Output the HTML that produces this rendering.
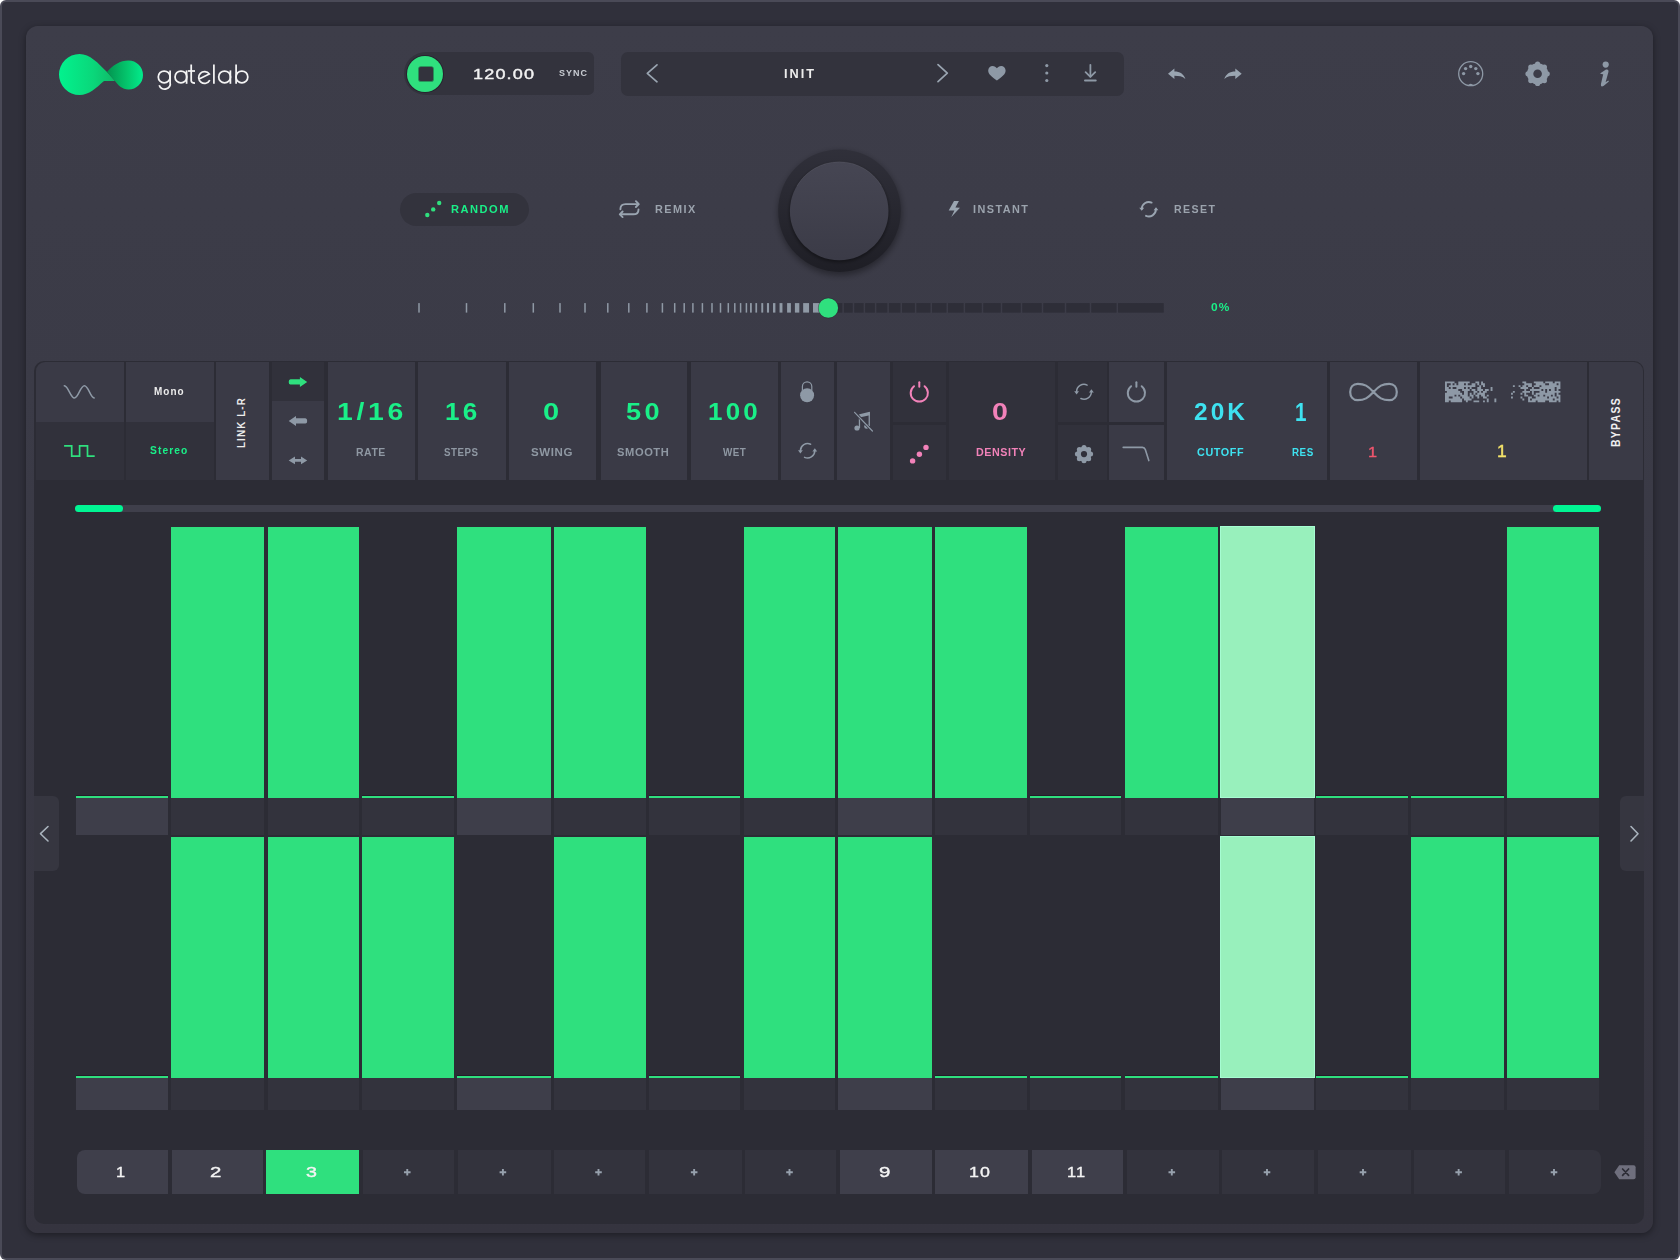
<!DOCTYPE html><html><head><meta charset="utf-8"><style>
html,body{margin:0;padding:0;}
body{width:1680px;height:1260px;overflow:hidden;background:#fff;position:relative;font-family:"Liberation Sans",sans-serif;}
body div, body svg{position:absolute;box-sizing:border-box;}
.t{white-space:nowrap;line-height:1;font-weight:bold;}
</style></head><body>

<div style="left:0px;top:0px;width:1680px;height:1260px;background:#4a4a57;border-radius:6px;"></div>
<div style="left:2px;top:2px;width:1676px;height:1256px;background:#30303b;border-radius:4px;"></div>
<div style="left:26px;top:26px;width:1627px;height:1207px;background:linear-gradient(#3d3d49,#3b3b47 30%,#35343f);border-radius:12px;box-shadow:0 2px 7px rgba(0,0,0,.4);"></div>
<div style="left:34px;top:361px;width:1610px;height:863px;background:#2c2c35;border-radius:10px;"></div>
<div style="left:76px;top:795px;width:92px;height:1px;background:#231d29;"></div>
<div style="left:76px;top:796px;width:92px;height:2px;background:#2fe07e;"></div>
<div style="left:76px;top:798px;width:92px;height:37px;background:#3e3e4a;"></div>
<div style="left:76px;top:1075px;width:92px;height:1px;background:#231d29;"></div>
<div style="left:76px;top:1076px;width:92px;height:2px;background:#2fe07e;"></div>
<div style="left:76px;top:1078px;width:92px;height:32px;background:#3e3e4a;"></div>
<div style="left:170.9px;top:527px;width:93.5px;height:271px;background:#2fe07e;"></div>
<div style="left:170.9px;top:798px;width:93.5px;height:37px;background:#33333d;"></div>
<div style="left:170.9px;top:837px;width:93.5px;height:241px;background:#2fe07e;"></div>
<div style="left:170.9px;top:1078px;width:93.5px;height:32px;background:#33333d;"></div>
<div style="left:267.6px;top:527px;width:91.8px;height:271px;background:#2fe07e;"></div>
<div style="left:267.6px;top:798px;width:91.8px;height:37px;background:#33333d;"></div>
<div style="left:267.6px;top:837px;width:91.8px;height:241px;background:#2fe07e;"></div>
<div style="left:267.6px;top:1078px;width:91.8px;height:32px;background:#33333d;"></div>
<div style="left:362.3px;top:795px;width:92.0px;height:1px;background:#231d29;"></div>
<div style="left:362.3px;top:796px;width:92.0px;height:2px;background:#2fe07e;"></div>
<div style="left:362.3px;top:798px;width:92.0px;height:37px;background:#33333d;"></div>
<div style="left:362.3px;top:837px;width:92.0px;height:241px;background:#2fe07e;"></div>
<div style="left:362.3px;top:1078px;width:92.0px;height:32px;background:#33333d;"></div>
<div style="left:457.1px;top:527px;width:93.8px;height:271px;background:#2fe07e;"></div>
<div style="left:457.1px;top:798px;width:93.8px;height:37px;background:#3e3e4a;"></div>
<div style="left:457.1px;top:1075px;width:93.8px;height:1px;background:#231d29;"></div>
<div style="left:457.1px;top:1076px;width:93.8px;height:2px;background:#2fe07e;"></div>
<div style="left:457.1px;top:1078px;width:93.8px;height:32px;background:#3e3e4a;"></div>
<div style="left:553.9px;top:527px;width:91.8px;height:271px;background:#2fe07e;"></div>
<div style="left:553.9px;top:798px;width:91.8px;height:37px;background:#33333d;"></div>
<div style="left:553.9px;top:837px;width:91.8px;height:241px;background:#2fe07e;"></div>
<div style="left:553.9px;top:1078px;width:91.8px;height:32px;background:#33333d;"></div>
<div style="left:648.6px;top:795px;width:91.9px;height:1px;background:#231d29;"></div>
<div style="left:648.6px;top:796px;width:91.9px;height:2px;background:#2fe07e;"></div>
<div style="left:648.6px;top:798px;width:91.9px;height:37px;background:#33333d;"></div>
<div style="left:648.6px;top:1075px;width:91.9px;height:1px;background:#231d29;"></div>
<div style="left:648.6px;top:1076px;width:91.9px;height:2px;background:#2fe07e;"></div>
<div style="left:648.6px;top:1078px;width:91.9px;height:32px;background:#33333d;"></div>
<div style="left:743.7px;top:527px;width:91.4px;height:271px;background:#2fe07e;"></div>
<div style="left:743.7px;top:798px;width:91.4px;height:37px;background:#33333d;"></div>
<div style="left:743.7px;top:837px;width:91.4px;height:241px;background:#2fe07e;"></div>
<div style="left:743.7px;top:1078px;width:91.4px;height:32px;background:#33333d;"></div>
<div style="left:838.2px;top:527px;width:93.7px;height:271px;background:#2fe07e;"></div>
<div style="left:838.2px;top:798px;width:93.7px;height:37px;background:#3e3e4a;"></div>
<div style="left:838.2px;top:837px;width:93.7px;height:241px;background:#2fe07e;"></div>
<div style="left:838.2px;top:1078px;width:93.7px;height:32px;background:#3e3e4a;"></div>
<div style="left:934.8px;top:527px;width:92.0px;height:271px;background:#2fe07e;"></div>
<div style="left:934.8px;top:798px;width:92.0px;height:37px;background:#33333d;"></div>
<div style="left:934.8px;top:1075px;width:92.0px;height:1px;background:#231d29;"></div>
<div style="left:934.8px;top:1076px;width:92.0px;height:2px;background:#2fe07e;"></div>
<div style="left:934.8px;top:1078px;width:92.0px;height:32px;background:#33333d;"></div>
<div style="left:1029.9px;top:795px;width:91.6px;height:1px;background:#231d29;"></div>
<div style="left:1029.9px;top:796px;width:91.6px;height:2px;background:#2fe07e;"></div>
<div style="left:1029.9px;top:798px;width:91.6px;height:37px;background:#33333d;"></div>
<div style="left:1029.9px;top:1075px;width:91.6px;height:1px;background:#231d29;"></div>
<div style="left:1029.9px;top:1076px;width:91.6px;height:2px;background:#2fe07e;"></div>
<div style="left:1029.9px;top:1078px;width:91.6px;height:32px;background:#33333d;"></div>
<div style="left:1124.8px;top:527px;width:93.3px;height:271px;background:#2fe07e;"></div>
<div style="left:1124.8px;top:798px;width:93.3px;height:37px;background:#33333d;"></div>
<div style="left:1124.8px;top:1075px;width:93.3px;height:1px;background:#231d29;"></div>
<div style="left:1124.8px;top:1076px;width:93.3px;height:2px;background:#2fe07e;"></div>
<div style="left:1124.8px;top:1078px;width:93.3px;height:32px;background:#33333d;"></div>
<div style="left:1219.5px;top:525.5px;width:95.0px;height:272.5px;background:#98f0bc;border:1px solid #a6fdd2;"></div>
<div style="left:1220.5px;top:798px;width:93.0px;height:37px;background:#3e3e4a;"></div>
<div style="left:1219.5px;top:835.5px;width:95.0px;height:242.5px;background:#98f0bc;border:1px solid #a6fdd2;"></div>
<div style="left:1220.5px;top:1078px;width:93.0px;height:32px;background:#3e3e4a;"></div>
<div style="left:1316.2px;top:795px;width:91.8px;height:1px;background:#231d29;"></div>
<div style="left:1316.2px;top:796px;width:91.8px;height:2px;background:#2fe07e;"></div>
<div style="left:1316.2px;top:798px;width:91.8px;height:37px;background:#33333d;"></div>
<div style="left:1316.2px;top:1075px;width:91.8px;height:1px;background:#231d29;"></div>
<div style="left:1316.2px;top:1076px;width:91.8px;height:2px;background:#2fe07e;"></div>
<div style="left:1316.2px;top:1078px;width:91.8px;height:32px;background:#33333d;"></div>
<div style="left:1410.9px;top:795px;width:93.3px;height:1px;background:#231d29;"></div>
<div style="left:1410.9px;top:796px;width:93.3px;height:2px;background:#2fe07e;"></div>
<div style="left:1410.9px;top:798px;width:93.3px;height:37px;background:#33333d;"></div>
<div style="left:1410.9px;top:837px;width:93.3px;height:241px;background:#2fe07e;"></div>
<div style="left:1410.9px;top:1078px;width:93.3px;height:32px;background:#33333d;"></div>
<div style="left:1507.2px;top:527px;width:91.8px;height:271px;background:#2fe07e;"></div>
<div style="left:1507.2px;top:798px;width:91.8px;height:37px;background:#33333d;"></div>
<div style="left:1507.2px;top:837px;width:91.8px;height:241px;background:#2fe07e;"></div>
<div style="left:1507.2px;top:1078px;width:91.8px;height:32px;background:#33333d;"></div>
<div style="left:74.5px;top:505px;width:1526px;height:7px;background:#3f3f4b;border-radius:4px;"></div>
<div style="left:74.5px;top:505px;width:48px;height:7px;background:#00f593;border-radius:4px;"></div>
<div style="left:1553px;top:505px;width:48px;height:7px;background:#00f593;border-radius:4px;"></div>
<div style="left:34px;top:796px;width:25px;height:75px;background:#363640;border-radius:0 6px 6px 0;"></div>
<div style="left:1619.5px;top:796px;width:24.5px;height:75px;background:#363640;border-radius:6px 0 0 6px;"></div>
<svg style="left:0;top:0" width="1680" height="1260" viewBox="0 0 1680 1260"><g fill="none" stroke="#a9b3bd" stroke-width="1.6" stroke-linecap="round" stroke-linejoin="round"><path d="M48 826.5 L40.5 833.7 L48 841"/><path d="M1631 826.5 L1638 833.7 L1631 841"/></g></svg>
<div style="left:77px;top:1150px;width:90.5px;height:44px;background:#3f3f4b;border-radius:8px 0 0 8px;"></div>
<div class="t" style="left:116.28px;top:1165.25px;font-size:14.49px;letter-spacing:0px;color:#f4f4f4;transform:scaleX(1.1233);transform-origin:0 0;font-weight:normal;-webkit-text-stroke:0.4px #f4f4f4;">1</div>
<div style="left:171.75px;top:1150px;width:90.75px;height:44px;background:#3f3f4b;"></div>
<div class="t" style="left:210.24px;top:1165.43px;font-size:14.29px;letter-spacing:0px;color:#f4f4f4;transform:scaleX(1.4231);transform-origin:0 0;font-weight:normal;-webkit-text-stroke:0.4px #f4f4f4;">2</div>
<div style="left:266.25px;top:1150px;width:92.5px;height:44px;background:#2fe07e;"></div>
<div class="t" style="left:306.22px;top:1165.46px;font-size:14.08px;letter-spacing:0px;color:#f4f4f4;transform:scaleX(1.3973);transform-origin:0 0;font-weight:normal;-webkit-text-stroke:0.4px #f4f4f4;">3</div>
<div style="left:363px;top:1150px;width:90.75px;height:44px;background:#33333d;"></div>
<div style="left:457.5px;top:1150px;width:93.0px;height:44px;background:#33333d;"></div>
<div style="left:553.9px;top:1150px;width:91.4px;height:44px;background:#33333d;"></div>
<div style="left:648.6px;top:1150px;width:93.3px;height:44px;background:#33333d;"></div>
<div style="left:744.8px;top:1150px;width:91.6px;height:44px;background:#33333d;"></div>
<div style="left:840px;top:1150px;width:91.7px;height:44px;background:#3f3f4b;"></div>
<div class="t" style="left:879.08px;top:1164.31px;font-size:15.07px;letter-spacing:0px;color:#f4f4f4;transform:scaleX(1.3556);transform-origin:0 0;font-weight:normal;-webkit-text-stroke:0.4px #f4f4f4;">9</div>
<div style="left:935.2px;top:1150px;width:92.8px;height:44px;background:#3f3f4b;"></div>
<div class="t" style="left:969.16px;top:1164.31px;font-size:15.07px;letter-spacing:1.0px;color:#f4f4f4;transform:scaleX(1.1838);transform-origin:0 0;font-weight:normal;-webkit-text-stroke:0.4px #f4f4f4;">10</div>
<div style="left:1031.7px;top:1150px;width:91.3px;height:44px;background:#3f3f4b;"></div>
<div class="t" style="left:1066.78px;top:1164.40px;font-size:15.51px;letter-spacing:1.0px;color:#f4f4f4;transform:scaleX(1.0528);transform-origin:0 0;font-weight:normal;-webkit-text-stroke:0.4px #f4f4f4;">11</div>
<div style="left:1126.8px;top:1150px;width:92.2px;height:44px;background:#33333d;"></div>
<div style="left:1222.4px;top:1150px;width:91.4px;height:44px;background:#33333d;"></div>
<div style="left:1317.6px;top:1150px;width:93.0px;height:44px;background:#33333d;"></div>
<div style="left:1414.2px;top:1150px;width:91.1px;height:44px;background:#33333d;"></div>
<div style="left:1509px;top:1150px;width:92.2px;height:44px;background:#33333d;border-radius:0 8px 8px 0;"></div>
<svg style="left:0;top:1140px" width="1680" height="60" viewBox="0 1140 1680 60"><path d="M403.97 1172.20H410.57M407.27 1168.90V1175.50M499.60 1172.20H506.20M502.90 1168.90V1175.50M595.20 1172.20H601.80M598.50 1168.90V1175.50M690.85 1172.20H697.45M694.15 1168.90V1175.50M786.20 1172.20H792.80M789.50 1168.90V1175.50M1168.50 1172.20H1175.10M1171.80 1168.90V1175.50M1263.70 1172.20H1270.30M1267.00 1168.90V1175.50M1359.70 1172.20H1366.30M1363.00 1168.90V1175.50M1455.35 1172.20H1461.95M1458.65 1168.90V1175.50M1550.70 1172.20H1557.30M1554.00 1168.90V1175.50" stroke="#97a1ad" stroke-width="1.9" fill="none"/></svg>
<div style="left:403.5px;top:51.7px;width:190.5px;height:43.7px;background:#33333d;border-radius:22px 6px 6px 22px;"></div>
<div style="left:407.3px;top:55.7px;width:36.2px;height:36.2px;background:#2fe07e;border-radius:50%;box-shadow:0 0 0 1px rgba(30,22,36,.55);"></div>
<div style="left:418.5px;top:67px;width:14px;height:14.1px;background:#33333d;border-radius:1.8px;box-shadow:0 0 0 0.8px rgba(30,22,36,.5);"></div>
<div class="t" style="left:472.64px;top:67.26px;font-size:14.08px;letter-spacing:0.9px;color:#f2f2f2;transform:scaleX(1.283);transform-origin:0 0;font-weight:normal;-webkit-text-stroke:0.4px #f2f2f2;">120.00</div>
<div class="t" style="left:558.73px;top:68.69px;font-size:9.01px;letter-spacing:1.0px;color:#c9cdd3;transform:scaleX(0.9966);transform-origin:0 0;">SYNC</div>
<div style="left:621px;top:52px;width:503px;height:43.5px;background:#33333d;border-radius:7px;"></div>
<div class="t" style="left:784.17px;top:66.98px;font-size:13.04px;letter-spacing:2.0px;color:#ececec;transform:scaleX(0.9773);transform-origin:0 0;">INIT</div>
<div style="left:400px;top:193px;width:129px;height:33px;background:#33333d;border-radius:17px;"></div>
<svg style="left:0;top:0" width="1680" height="360" viewBox="0 0 1680 360"><defs><linearGradient id="lg1" x1="59" y1="0" x2="116" y2="0" gradientUnits="userSpaceOnUse"><stop offset="0" stop-color="#02f28e"/><stop offset="0.6" stop-color="#0ad77a"/><stop offset="1" stop-color="#10b766"/></linearGradient><linearGradient id="lg2" x1="107" y1="0" x2="143" y2="0" gradientUnits="userSpaceOnUse"><stop offset="0" stop-color="#03934f"/><stop offset="0.55" stop-color="#04c56c"/><stop offset="1" stop-color="#02ec8c"/></linearGradient><linearGradient id="kr" x1="0" y1="149" x2="0" y2="272" gradientUnits="userSpaceOnUse"><stop offset="0" stop-color="#30303a"/><stop offset="1" stop-color="#1e1e25"/></linearGradient><linearGradient id="kn" x1="0" y1="162" x2="0" y2="260" gradientUnits="userSpaceOnUse"><stop offset="0" stop-color="#464653"/><stop offset="1" stop-color="#3b3b47"/></linearGradient><filter id="blur3" x="-20%" y="-20%" width="140%" height="140%"><feGaussianBlur stdDeviation="3"/></filter><filter id="blur2" x="-20%" y="-20%" width="140%" height="140%"><feGaussianBlur stdDeviation="1.6"/></filter></defs><path fill="url(#lg1)" d="M59 74.5 A20.5 20.5 0 0 1 79.5 54 C90 54 98 63 107 72 L115 81 L104 81 C96 88 89 95 79.5 95 A20.5 20.5 0 0 1 59 74.5 Z"/><path fill="url(#lg2)" d="M107 72 C113 65 120 60.5 128.5 60.5 A14.5 14.5 0 0 1 128.5 89.5 C122 89.5 118 85 115 81 Z"/><g fill="none" stroke="#f4f4f4" stroke-width="1.75"><circle cx="164.2" cy="76.9" r="5.9"/><path d="M170.1 70.4 V82.6 A5.5 5 0 0 1 159.2 85.3"/><circle cx="180.95" cy="76.9" r="5.9"/><path d="M186.6 70.4 V83.8"/><path d="M191.2 64.4 V80.5 Q191.2 83 195 83"/><path d="M188 71 H195"/><path d="M198.6 79.2 L209.3 74 A5.9 5.9 0 1 0 209.8 80.2"/><path d="M213.9 64.4 V83.8"/><circle cx="224.6" cy="76.9" r="5.9"/><path d="M230.4 70.4 V83.8"/><path d="M236.1 64.4 V83.8"/><circle cx="241.9" cy="76.9" r="5.9"/></g><g fill="none" stroke="#9aa5b1" stroke-width="1.7" stroke-linecap="round" stroke-linejoin="round"><path d="M657 64.8 L647.3 73.3 L657 81.8"/><path d="M938 64.6 L947.3 73.2 L938 81.6"/></g><path fill="#8e99a6" d="M996.9 80.6 C992 77 988.2 74.5 988.2 70.6 C988.2 67.7 990.3 66 992.6 66 C994.5 66 996 67 996.9 68.3 C997.8 67 999.3 66 1001.2 66 C1003.5 66 1005.6 67.7 1005.6 70.6 C1005.6 74.5 1001.8 77 996.9 80.6 Z"/><g fill="#8e99a6"><circle cx="1046.8" cy="65.6" r="1.6"/><circle cx="1046.8" cy="73" r="1.6"/><circle cx="1046.8" cy="80.5" r="1.6"/></g><g fill="none" stroke="#8e99a6" stroke-width="1.8" stroke-linecap="round" stroke-linejoin="round"><path d="M1090.4 64.8 V76.6"/><path d="M1085.6 72.2 L1090.4 76.9 L1095.2 72.2"/></g><rect x="1084" y="79.6" width="12.7" height="2" rx="1" fill="#8e99a6"/><path fill="#9aa5b1" d="M1168 73.7 L1174.4 68.6 L1174.4 71.5 C1179.8 71.5 1183.8 74 1185.4 78.9 C1182.4 76.4 1178.8 75.8 1174.4 75.8 L1174.4 79 Z"/><path fill="#9aa5b1" transform="translate(2409.7 0) scale(-1 1)" d="M1168 73.7 L1174.4 68.6 L1174.4 71.5 C1179.8 71.5 1183.8 74 1185.4 78.9 C1182.4 76.4 1178.8 75.8 1174.4 75.8 L1174.4 79 Z"/><circle cx="1470.7" cy="73.7" r="12" fill="none" stroke="#8e99a6" stroke-width="1.3"/><g fill="#8e99a6"><circle cx="1463.6" cy="73.6" r="1.7"/><circle cx="1465.6" cy="68.6" r="1.7"/><circle cx="1470.7" cy="66.5" r="1.7"/><circle cx="1475.8" cy="68.6" r="1.7"/><circle cx="1477.9" cy="73.6" r="1.7"/><path d="M1467.7 85.6 Q1470.7 82 1473.7 85.6 Z"/></g><g fill="#8e99a6"><circle cx="1537.6" cy="73.8" r="10.6"/><circle cx="1547.20" cy="73.80" r="2.6"/><circle cx="1544.39" cy="80.59" r="2.6"/><circle cx="1537.60" cy="83.40" r="2.6"/><circle cx="1530.81" cy="80.59" r="2.6"/><circle cx="1528.00" cy="73.80" r="2.6"/><circle cx="1530.81" cy="67.01" r="2.6"/><circle cx="1537.60" cy="64.20" r="2.6"/><circle cx="1544.39" cy="67.01" r="2.6"/></g><circle cx="1537.6" cy="73.8" r="4.3" fill="#3c3c48"/><g fill="#8e99a6"><circle cx="1605.7" cy="64.55" r="3.1"/><path d="M1600 73.6 L1606 69.6 Q1608.8 68.9 1608.5 71.8 L1605.6 82.3 L1608.3 80.6 L1608.9 81.6 L1603.8 85.7 Q1600.6 87.6 1600.9 84.2 L1603.2 74.2 Q1601.8 74.4 1600 73.6 Z"/></g><g fill="#2fe07e"><circle cx="427.3" cy="215" r="2.2"/><circle cx="433.2" cy="209.4" r="2.2"/><circle cx="439.2" cy="203" r="2.2"/></g><g fill="none" stroke="#9aa5b1" stroke-width="1.9" stroke-linecap="round" stroke-linejoin="round"><path d="M620.4 209.2 C620.4 206 622.5 204.1 625.5 204.1 H637.4"/><path d="M635.9 201.2 L638.8 204.1 L635.9 207"/><path d="M638.5 209.4 C638.5 212.4 636.4 214.3 633.3 214.3 H621"/><path d="M622.6 211.5 L619.8 214.3 L622.6 217.1"/></g><path fill="#9aa5b1" d="M954 201 L958.9 201 L955.4 207.6 L960 207.8 L951.3 216.9 L954.4 210.6 L948.7 210.6 Z"/><g fill="none" stroke="#9aa5b1" stroke-width="1.9" stroke-linecap="round"><path d="M1151.6 202.6 A7 7 0 0 0 1141.8 208.6"/><path d="M1146 215.8 A7 7 0 0 0 1155.9 209.6"/></g><g fill="#9aa5b1"><path d="M1139.2 207.8 L1144.2 207.8 L1141.7 210.8 Z"/><path d="M1153.6 210.2 L1158.4 210.2 L1156 207.2 Z"/></g><circle cx="840" cy="213.5" r="62" fill="rgba(0,0,0,0.35)" filter="url(#blur3)"/><circle cx="839.5" cy="210.7" r="61.3" fill="url(#kr)"/><circle cx="839.2" cy="212.5" r="50" fill="rgba(0,0,0,0.35)" filter="url(#blur2)"/><circle cx="839.2" cy="211" r="49.3" fill="url(#kn)"/><path d="M797 186 A49 49 0 0 1 881.5 186" fill="none" stroke="rgba(255,255,255,0.06)" stroke-width="1"/></svg>
<div class="t" style="left:450.58px;top:204.29px;font-size:11.13px;letter-spacing:1.5px;color:#1aef88;transform:scaleX(0.9986);transform-origin:0 0;">RANDOM</div>
<div class="t" style="left:654.90px;top:204.13px;font-size:11.45px;letter-spacing:1.5px;color:#9ba3ad;transform:scaleX(0.9519);transform-origin:0 0;">REMIX</div>
<div class="t" style="left:972.70px;top:204.25px;font-size:11.41px;letter-spacing:1.5px;color:#9ba3ad;transform:scaleX(0.9524);transform-origin:0 0;">INSTANT</div>
<div class="t" style="left:1174.11px;top:204.25px;font-size:11.41px;letter-spacing:1.5px;color:#9ba3ad;transform:scaleX(0.931);transform-origin:0 0;">RESET</div>
<div style="left:36.4px;top:362px;width:87.2px;height:59.8px;background:#3a3a46;border-radius:9px 0 0 0;"></div>
<div style="left:36.4px;top:421.8px;width:87.2px;height:58.2px;background:#31313b;"></div>
<div style="left:125.7px;top:362px;width:87.9px;height:59.8px;background:#3a3a46;"></div>
<div style="left:125.7px;top:421.8px;width:87.9px;height:58.2px;background:#31313b;"></div>
<div style="left:215.7px;top:362px;width:53.6px;height:118px;background:#3a3a46;"></div>
<div style="left:271.8px;top:362px;width:52.2px;height:38.7px;background:#31313b;"></div>
<div style="left:271.8px;top:400.7px;width:52.2px;height:79.3px;background:#3a3a46;"></div>
<div style="left:328px;top:362px;width:87.3px;height:118px;background:#3a3a46;"></div>
<div style="left:418.3px;top:362px;width:87.5px;height:118px;background:#3a3a46;"></div>
<div style="left:508.8px;top:362px;width:87.0px;height:118px;background:#3a3a46;"></div>
<div style="left:600.5px;top:362px;width:86.9px;height:118px;background:#3a3a46;"></div>
<div style="left:690.7px;top:362px;width:87.1px;height:118px;background:#3a3a46;"></div>
<div style="left:781px;top:362px;width:53px;height:118px;background:#3a3a46;"></div>
<div style="left:836.8px;top:362px;width:53.0px;height:118px;background:#3a3a46;"></div>
<div style="left:892.6px;top:362px;width:53.4px;height:59.6px;background:#31313b;"></div>
<div style="left:892.6px;top:424.8px;width:53.4px;height:55.2px;background:#31313b;"></div>
<div style="left:949px;top:362px;width:106px;height:118px;background:#31313b;"></div>
<div style="left:1058px;top:362px;width:49px;height:59.6px;background:#31313b;"></div>
<div style="left:1058px;top:424.8px;width:49px;height:55.2px;background:#31313b;"></div>
<div style="left:1109px;top:362px;width:54.7px;height:59.6px;background:#3a3a46;"></div>
<div style="left:1109px;top:424.8px;width:54.7px;height:55.2px;background:#3a3a46;"></div>
<div style="left:1166.8px;top:362px;width:160.4px;height:118px;background:#3a3a46;"></div>
<div style="left:1330px;top:362px;width:87.2px;height:118px;background:#3a3a46;"></div>
<div style="left:1420px;top:362px;width:166.8px;height:118px;background:#3a3a46;"></div>
<div style="left:1589.3px;top:362px;width:53.6px;height:118px;background:#3a3a46;border-radius:0 9px 0 0;"></div>
<div class="t" style="left:337.15px;top:401.23px;font-size:23.09px;letter-spacing:3.0px;color:#1aef88;transform:scaleX(1.2306);transform-origin:0 0;">1/16</div>
<div class="t" style="left:445.01px;top:400.19px;font-size:24.23px;letter-spacing:3.0px;color:#1aef88;transform:scaleX(1.0765);transform-origin:0 0;">16</div>
<div class="t" style="left:542.54px;top:400.19px;font-size:24.23px;letter-spacing:3.0px;color:#1aef88;transform:scaleX(1.1993);transform-origin:0 0;">0</div>
<div class="t" style="left:626.18px;top:400.19px;font-size:24.23px;letter-spacing:3.0px;color:#1aef88;transform:scaleX(1.1197);transform-origin:0 0;">50</div>
<div class="t" style="left:708.32px;top:400.19px;font-size:24.23px;letter-spacing:3.0px;color:#1aef88;transform:scaleX(1.0719);transform-origin:0 0;">100</div>
<div class="t" style="left:356.32px;top:447.00px;font-size:11.59px;letter-spacing:0.6px;color:#8f98a3;transform:scaleX(0.904);transform-origin:0 0;">RATE</div>
<div class="t" style="left:444.41px;top:447.17px;font-size:11.27px;letter-spacing:0.6px;color:#8f98a3;transform:scaleX(0.8629);transform-origin:0 0;">STEPS</div>
<div class="t" style="left:530.95px;top:447.17px;font-size:11.27px;letter-spacing:0.6px;color:#8f98a3;transform:scaleX(1.0215);transform-origin:0 0;">SWING</div>
<div class="t" style="left:617.36px;top:447.17px;font-size:11.27px;letter-spacing:0.6px;color:#8f98a3;transform:scaleX(0.9878);transform-origin:0 0;">SMOOTH</div>
<div class="t" style="left:722.50px;top:447.00px;font-size:11.59px;letter-spacing:0.6px;color:#8f98a3;transform:scaleX(0.8495);transform-origin:0 0;">WET</div>
<div class="t" style="left:992.05px;top:400.19px;font-size:24.23px;letter-spacing:3.0px;color:#f282b9;transform:scaleX(1.1819);transform-origin:0 0;">0</div>
<div class="t" style="left:975.90px;top:447.08px;font-size:11.83px;letter-spacing:0.6px;color:#f282b9;transform:scaleX(0.9074);transform-origin:0 0;">DENSITY</div>
<div class="t" style="left:1193.74px;top:400.19px;font-size:24.23px;letter-spacing:3.0px;color:#3ee2f0;transform:scaleX(1.0102);transform-origin:0 0;">20K</div>
<div class="t" style="left:1294.56px;top:399.54px;font-size:24.93px;letter-spacing:3.0px;color:#3ee2f0;transform:scaleX(0.8282);transform-origin:0 0;">1</div>
<div class="t" style="left:1197.37px;top:446.61px;font-size:10.99px;letter-spacing:0.6px;color:#3ee2f0;transform:scaleX(0.9844);transform-origin:0 0;">CUTOFF</div>
<div class="t" style="left:1291.57px;top:446.61px;font-size:10.99px;letter-spacing:0.6px;color:#3ee2f0;transform:scaleX(0.8926);transform-origin:0 0;">RES</div>
<div class="t" style="left:1367.78px;top:443.50px;font-size:15.51px;letter-spacing:0px;color:#f0566e;transform:scaleX(1.0498);transform-origin:0 0;font-weight:normal;-webkit-text-stroke:0.4px #f0566e;">1</div>
<div class="t" style="left:1497.19px;top:444.19px;font-size:16.81px;letter-spacing:0px;color:#f5e46a;transform:scaleX(1.0375);transform-origin:0 0;font-weight:normal;-webkit-text-stroke:0.4px #f5e46a;">1</div>
<div class="t" style="left:154.26px;top:385.93px;font-size:11.43px;letter-spacing:1.2px;color:#ececec;transform:scaleX(0.8704);transform-origin:0 0;">Mono</div>
<div class="t" style="left:150.39px;top:445.17px;font-size:11.27px;letter-spacing:1.2px;color:#1aef88;transform:scaleX(0.9086);transform-origin:0 0;">Stereo</div>
<div class="t" style="left:237.38px;top:447.94px;font-size:10.43px;letter-spacing:1.2px;color:#ececec;transform:rotate(-90deg) scaleX(0.9382);transform-origin:0 0;">LINK L-R</div>
<div class="t" style="left:1610.36px;top:446.97px;font-size:12.68px;letter-spacing:1.6px;color:#f0f0f0;transform:rotate(-90deg) scaleX(0.8226);transform-origin:0 0;">BYPASS</div>
<svg style="left:0;top:350px" width="1680" height="140" viewBox="0 350 1680 140"><path d="M64.3 385.8 C68.6 386.3 70.4 398 74.4 398 C78.4 398 80.3 385.7 84.4 385.7 C88.5 385.7 90.2 397.5 94.2 398" fill="none" stroke="#8e99a6" stroke-width="1.5" stroke-linecap="round"/><path d="M64.1 445.8 H71.7 V456.1 H79.6 V445.8 H87.5 V456.1 H94.7" fill="none" stroke="#2fe07e" stroke-width="1.7"/><path fill="#8e99a6" d="M288.7 420.9 L296 415.9 L296 418.3 L305.4 418.3 Q307.2 418.3 307.2 420.9 Q307.2 423.5 305.4 423.5 L296 423.5 L296 425.9 Z"/><path fill="#2fe07e" transform="translate(595.9 -39) scale(-1 1)" d="M288.7 420.9 L296 415.9 L296 418.3 L305.4 418.3 Q307.2 418.3 307.2 420.9 Q307.2 423.5 305.4 423.5 L296 423.5 L296 425.9 Z"/><path fill="#8e99a6" d="M288.7 460.4 L295 456.6 L295 459 L301 459 L301 456.6 L307.2 460.4 L301 464.2 L301 461.8 L295 461.8 L295 464.2 Z"/><path d="M802.4 390 V386.5 A4.7 4.7 0 0 1 811.8 386.5 V390" fill="none" stroke="#8e99a6" stroke-width="1.2"/><circle cx="807.1" cy="395.3" r="7" fill="#8e99a6"/><g fill="none" stroke="#8e99a6" stroke-width="1.5" stroke-linecap="round"><path d="M810.64 444.27 A7.2 7.2 0 0 0 800.40 450.55"/><path d="M804.56 457.33 A7.2 7.2 0 0 0 814.80 451.05"/></g><g fill="#8e99a6"><path d="M798.00 450.20 L802.80 450.20 L800.40 453.40 Z"/><path d="M812.40 451.40 L817.20 451.40 L814.80 448.20 Z"/></g><g fill="none" stroke="#8e99a6" stroke-width="1.5" stroke-linecap="round"><path d="M1087.13 385.09 A7.4 7.4 0 0 0 1076.60 391.54"/><path d="M1080.87 398.51 A7.4 7.4 0 0 0 1091.40 392.06"/></g><g fill="#8e99a6"><path d="M1074.20 391.20 L1079.00 391.20 L1076.60 394.40 Z"/><path d="M1089.00 392.40 L1093.80 392.40 L1091.40 389.20 Z"/></g><g fill="#8e99a6"><circle cx="857" cy="428" r="2.6"/><rect x="858.8" y="414.6" width="1.3" height="13.5"/><path d="M859.4 414.2 L869.8 411.8 L869.8 415.2 L859.4 417.6 Z"/><rect x="868.6" y="412" width="1.3" height="14"/><circle cx="866.6" cy="426.4" r="2.4"/></g><path d="M855.5 413 L871.8 430.6" stroke="#3a3a46" stroke-width="2.6"/><path d="M854.6 412.3 L872.4 431" stroke="#8e99a6" stroke-width="1.2" stroke-linecap="round"/><g fill="none" stroke="#f282b9" stroke-width="2" stroke-linecap="round"><path d="M924.59 386.22 A8.6 8.6 0 1 1 914.01 386.22"/><path d="M919.3 382.2 V386.8"/></g><g fill="none" stroke="#8e99a6" stroke-width="2" stroke-linecap="round"><path d="M1141.69 386.22 A8.6 8.6 0 1 1 1131.11 386.22"/><path d="M1136.4 382.2 V386.8"/></g><g fill="#f282b9"><circle cx="912.6" cy="460.9" r="2.7"/><circle cx="919.4" cy="454.2" r="2.7"/><circle cx="926" cy="447.4" r="2.7"/></g><g fill="#8e99a6"><circle cx="1084" cy="454.1" r="7.4"/><circle cx="1090.60" cy="454.10" r="2.5"/><circle cx="1088.67" cy="458.77" r="2.5"/><circle cx="1084.00" cy="460.70" r="2.5"/><circle cx="1079.33" cy="458.77" r="2.5"/><circle cx="1077.40" cy="454.10" r="2.5"/><circle cx="1079.33" cy="449.43" r="2.5"/><circle cx="1084.00" cy="447.50" r="2.5"/><circle cx="1088.67" cy="449.43" r="2.5"/></g><circle cx="1084" cy="454.1" r="3.1" fill="#31313b"/><path d="M1123.2 447.4 H1142.5 Q1144.5 447.4 1145.3 449.6 L1148.8 460.6" fill="none" stroke="#8e99a6" stroke-width="1.6" stroke-linecap="round"/><path d="M1373.5 392 C1368 386 1364.5 383.8 1357.8 383.8 C1352.8 383.8 1350.2 387.6 1350.2 392 C1350.2 396.4 1352.8 400.2 1357.8 400.2 C1364.5 400.2 1368 398 1373.5 392 C1379 386 1382.5 383.8 1389.2 383.8 C1394.2 383.8 1396.8 387.6 1396.8 392 C1396.8 396.4 1394.2 400.2 1389.2 400.2 C1382.5 400.2 1379 398 1373.5 392 Z" fill="none" stroke="#8e99a6" stroke-width="2.2"/><path fill="#8e99a6" d="M1445.00 381.40h1.9v1.9h-1.9zM1558.50 381.40h1.9v1.9h-1.9zM1446.90 381.40h1.9v1.9h-1.9zM1556.60 381.40h1.9v1.9h-1.9zM1448.80 381.40h1.9v1.9h-1.9zM1554.70 381.40h1.9v1.9h-1.9zM1450.70 381.40h1.9v1.9h-1.9zM1452.60 381.40h1.9v1.9h-1.9zM1550.90 381.40h1.9v1.9h-1.9zM1549.00 381.40h1.9v1.9h-1.9zM1547.10 381.40h1.9v1.9h-1.9zM1458.30 381.40h1.9v1.9h-1.9zM1545.20 381.40h1.9v1.9h-1.9zM1460.20 381.40h1.9v1.9h-1.9zM1462.10 381.40h1.9v1.9h-1.9zM1541.40 381.40h1.9v1.9h-1.9zM1464.00 381.40h1.9v1.9h-1.9zM1539.50 381.40h1.9v1.9h-1.9zM1465.90 381.40h1.9v1.9h-1.9zM1537.60 381.40h1.9v1.9h-1.9zM1467.80 381.40h1.9v1.9h-1.9zM1535.70 381.40h1.9v1.9h-1.9zM1533.80 381.40h1.9v1.9h-1.9zM1475.40 381.40h1.9v1.9h-1.9zM1477.30 381.40h1.9v1.9h-1.9zM1524.30 381.40h1.9v1.9h-1.9zM1481.10 381.40h1.9v1.9h-1.9zM1522.40 381.40h1.9v1.9h-1.9zM1445.00 383.30h1.9v1.9h-1.9zM1558.50 383.30h1.9v1.9h-1.9zM1554.70 383.30h1.9v1.9h-1.9zM1450.70 383.30h1.9v1.9h-1.9zM1552.80 383.30h1.9v1.9h-1.9zM1550.90 383.30h1.9v1.9h-1.9zM1454.50 383.30h1.9v1.9h-1.9zM1549.00 383.30h1.9v1.9h-1.9zM1458.30 383.30h1.9v1.9h-1.9zM1460.20 383.30h1.9v1.9h-1.9zM1543.30 383.30h1.9v1.9h-1.9zM1462.10 383.30h1.9v1.9h-1.9zM1541.40 383.30h1.9v1.9h-1.9zM1539.50 383.30h1.9v1.9h-1.9zM1465.90 383.30h1.9v1.9h-1.9zM1537.60 383.30h1.9v1.9h-1.9zM1535.70 383.30h1.9v1.9h-1.9zM1471.60 383.30h1.9v1.9h-1.9zM1473.50 383.30h1.9v1.9h-1.9zM1530.00 383.30h1.9v1.9h-1.9zM1528.10 383.30h1.9v1.9h-1.9zM1477.30 383.30h1.9v1.9h-1.9zM1526.20 383.30h1.9v1.9h-1.9zM1524.30 383.30h1.9v1.9h-1.9zM1481.10 383.30h1.9v1.9h-1.9zM1483.00 383.30h1.9v1.9h-1.9zM1445.00 385.20h1.9v1.9h-1.9zM1558.50 385.20h1.9v1.9h-1.9zM1556.60 385.20h1.9v1.9h-1.9zM1448.80 385.20h1.9v1.9h-1.9zM1554.70 385.20h1.9v1.9h-1.9zM1450.70 385.20h1.9v1.9h-1.9zM1552.80 385.20h1.9v1.9h-1.9zM1452.60 385.20h1.9v1.9h-1.9zM1550.90 385.20h1.9v1.9h-1.9zM1454.50 385.20h1.9v1.9h-1.9zM1549.00 385.20h1.9v1.9h-1.9zM1456.40 385.20h1.9v1.9h-1.9zM1547.10 385.20h1.9v1.9h-1.9zM1458.30 385.20h1.9v1.9h-1.9zM1545.20 385.20h1.9v1.9h-1.9zM1460.20 385.20h1.9v1.9h-1.9zM1543.30 385.20h1.9v1.9h-1.9zM1462.10 385.20h1.9v1.9h-1.9zM1541.40 385.20h1.9v1.9h-1.9zM1464.00 385.20h1.9v1.9h-1.9zM1465.90 385.20h1.9v1.9h-1.9zM1537.60 385.20h1.9v1.9h-1.9zM1467.80 385.20h1.9v1.9h-1.9zM1535.70 385.20h1.9v1.9h-1.9zM1469.70 385.20h1.9v1.9h-1.9zM1533.80 385.20h1.9v1.9h-1.9zM1471.60 385.20h1.9v1.9h-1.9zM1473.50 385.20h1.9v1.9h-1.9zM1530.00 385.20h1.9v1.9h-1.9zM1528.10 385.20h1.9v1.9h-1.9zM1479.20 385.20h1.9v1.9h-1.9zM1524.30 385.20h1.9v1.9h-1.9zM1522.40 385.20h1.9v1.9h-1.9zM1483.00 385.20h1.9v1.9h-1.9zM1518.60 385.20h1.9v1.9h-1.9zM1512.90 385.20h1.9v1.9h-1.9zM1445.00 387.10h1.9v1.9h-1.9zM1558.50 387.10h1.9v1.9h-1.9zM1446.90 387.10h1.9v1.9h-1.9zM1556.60 387.10h1.9v1.9h-1.9zM1450.70 387.10h1.9v1.9h-1.9zM1552.80 387.10h1.9v1.9h-1.9zM1550.90 387.10h1.9v1.9h-1.9zM1549.00 387.10h1.9v1.9h-1.9zM1456.40 387.10h1.9v1.9h-1.9zM1547.10 387.10h1.9v1.9h-1.9zM1458.30 387.10h1.9v1.9h-1.9zM1545.20 387.10h1.9v1.9h-1.9zM1460.20 387.10h1.9v1.9h-1.9zM1543.30 387.10h1.9v1.9h-1.9zM1462.10 387.10h1.9v1.9h-1.9zM1541.40 387.10h1.9v1.9h-1.9zM1539.50 387.10h1.9v1.9h-1.9zM1465.90 387.10h1.9v1.9h-1.9zM1469.70 387.10h1.9v1.9h-1.9zM1531.90 387.10h1.9v1.9h-1.9zM1477.30 387.10h1.9v1.9h-1.9zM1526.20 387.10h1.9v1.9h-1.9zM1479.20 387.10h1.9v1.9h-1.9zM1524.30 387.10h1.9v1.9h-1.9zM1522.40 387.10h1.9v1.9h-1.9zM1520.50 387.10h1.9v1.9h-1.9zM1490.60 387.10h1.9v1.9h-1.9zM1445.00 389.00h1.9v1.9h-1.9zM1446.90 389.00h1.9v1.9h-1.9zM1556.60 389.00h1.9v1.9h-1.9zM1448.80 389.00h1.9v1.9h-1.9zM1450.70 389.00h1.9v1.9h-1.9zM1552.80 389.00h1.9v1.9h-1.9zM1452.60 389.00h1.9v1.9h-1.9zM1550.90 389.00h1.9v1.9h-1.9zM1454.50 389.00h1.9v1.9h-1.9zM1456.40 389.00h1.9v1.9h-1.9zM1547.10 389.00h1.9v1.9h-1.9zM1543.30 389.00h1.9v1.9h-1.9zM1462.10 389.00h1.9v1.9h-1.9zM1464.00 389.00h1.9v1.9h-1.9zM1539.50 389.00h1.9v1.9h-1.9zM1465.90 389.00h1.9v1.9h-1.9zM1537.60 389.00h1.9v1.9h-1.9zM1467.80 389.00h1.9v1.9h-1.9zM1535.70 389.00h1.9v1.9h-1.9zM1533.80 389.00h1.9v1.9h-1.9zM1471.60 389.00h1.9v1.9h-1.9zM1531.90 389.00h1.9v1.9h-1.9zM1473.50 389.00h1.9v1.9h-1.9zM1530.00 389.00h1.9v1.9h-1.9zM1477.30 389.00h1.9v1.9h-1.9zM1479.20 389.00h1.9v1.9h-1.9zM1524.30 389.00h1.9v1.9h-1.9zM1481.10 389.00h1.9v1.9h-1.9zM1484.90 389.00h1.9v1.9h-1.9zM1486.80 389.00h1.9v1.9h-1.9zM1490.60 389.00h1.9v1.9h-1.9zM1558.50 390.90h1.9v1.9h-1.9zM1446.90 390.90h1.9v1.9h-1.9zM1556.60 390.90h1.9v1.9h-1.9zM1448.80 390.90h1.9v1.9h-1.9zM1554.70 390.90h1.9v1.9h-1.9zM1450.70 390.90h1.9v1.9h-1.9zM1552.80 390.90h1.9v1.9h-1.9zM1452.60 390.90h1.9v1.9h-1.9zM1550.90 390.90h1.9v1.9h-1.9zM1454.50 390.90h1.9v1.9h-1.9zM1549.00 390.90h1.9v1.9h-1.9zM1456.40 390.90h1.9v1.9h-1.9zM1547.10 390.90h1.9v1.9h-1.9zM1458.30 390.90h1.9v1.9h-1.9zM1543.30 390.90h1.9v1.9h-1.9zM1541.40 390.90h1.9v1.9h-1.9zM1464.00 390.90h1.9v1.9h-1.9zM1539.50 390.90h1.9v1.9h-1.9zM1465.90 390.90h1.9v1.9h-1.9zM1531.90 390.90h1.9v1.9h-1.9zM1473.50 390.90h1.9v1.9h-1.9zM1475.40 390.90h1.9v1.9h-1.9zM1528.10 390.90h1.9v1.9h-1.9zM1526.20 390.90h1.9v1.9h-1.9zM1479.20 390.90h1.9v1.9h-1.9zM1524.30 390.90h1.9v1.9h-1.9zM1522.40 390.90h1.9v1.9h-1.9zM1483.00 390.90h1.9v1.9h-1.9zM1484.90 390.90h1.9v1.9h-1.9zM1512.90 390.90h1.9v1.9h-1.9zM1445.00 392.80h1.9v1.9h-1.9zM1446.90 392.80h1.9v1.9h-1.9zM1556.60 392.80h1.9v1.9h-1.9zM1448.80 392.80h1.9v1.9h-1.9zM1450.70 392.80h1.9v1.9h-1.9zM1552.80 392.80h1.9v1.9h-1.9zM1452.60 392.80h1.9v1.9h-1.9zM1550.90 392.80h1.9v1.9h-1.9zM1454.50 392.80h1.9v1.9h-1.9zM1549.00 392.80h1.9v1.9h-1.9zM1456.40 392.80h1.9v1.9h-1.9zM1547.10 392.80h1.9v1.9h-1.9zM1458.30 392.80h1.9v1.9h-1.9zM1545.20 392.80h1.9v1.9h-1.9zM1460.20 392.80h1.9v1.9h-1.9zM1543.30 392.80h1.9v1.9h-1.9zM1541.40 392.80h1.9v1.9h-1.9zM1464.00 392.80h1.9v1.9h-1.9zM1539.50 392.80h1.9v1.9h-1.9zM1465.90 392.80h1.9v1.9h-1.9zM1537.60 392.80h1.9v1.9h-1.9zM1535.70 392.80h1.9v1.9h-1.9zM1469.70 392.80h1.9v1.9h-1.9zM1531.90 392.80h1.9v1.9h-1.9zM1473.50 392.80h1.9v1.9h-1.9zM1477.30 392.80h1.9v1.9h-1.9zM1479.20 392.80h1.9v1.9h-1.9zM1524.30 392.80h1.9v1.9h-1.9zM1481.10 392.80h1.9v1.9h-1.9zM1483.00 392.80h1.9v1.9h-1.9zM1520.50 392.80h1.9v1.9h-1.9zM1511.00 392.80h1.9v1.9h-1.9zM1445.00 394.70h1.9v1.9h-1.9zM1558.50 394.70h1.9v1.9h-1.9zM1446.90 394.70h1.9v1.9h-1.9zM1556.60 394.70h1.9v1.9h-1.9zM1448.80 394.70h1.9v1.9h-1.9zM1450.70 394.70h1.9v1.9h-1.9zM1552.80 394.70h1.9v1.9h-1.9zM1452.60 394.70h1.9v1.9h-1.9zM1549.00 394.70h1.9v1.9h-1.9zM1456.40 394.70h1.9v1.9h-1.9zM1547.10 394.70h1.9v1.9h-1.9zM1545.20 394.70h1.9v1.9h-1.9zM1460.20 394.70h1.9v1.9h-1.9zM1462.10 394.70h1.9v1.9h-1.9zM1541.40 394.70h1.9v1.9h-1.9zM1464.00 394.70h1.9v1.9h-1.9zM1539.50 394.70h1.9v1.9h-1.9zM1465.90 394.70h1.9v1.9h-1.9zM1535.70 394.70h1.9v1.9h-1.9zM1469.70 394.70h1.9v1.9h-1.9zM1533.80 394.70h1.9v1.9h-1.9zM1471.60 394.70h1.9v1.9h-1.9zM1475.40 394.70h1.9v1.9h-1.9zM1477.30 394.70h1.9v1.9h-1.9zM1526.20 394.70h1.9v1.9h-1.9zM1524.30 394.70h1.9v1.9h-1.9zM1481.10 394.70h1.9v1.9h-1.9zM1483.00 394.70h1.9v1.9h-1.9zM1486.80 394.70h1.9v1.9h-1.9zM1445.00 396.60h1.9v1.9h-1.9zM1558.50 396.60h1.9v1.9h-1.9zM1446.90 396.60h1.9v1.9h-1.9zM1554.70 396.60h1.9v1.9h-1.9zM1552.80 396.60h1.9v1.9h-1.9zM1452.60 396.60h1.9v1.9h-1.9zM1550.90 396.60h1.9v1.9h-1.9zM1454.50 396.60h1.9v1.9h-1.9zM1549.00 396.60h1.9v1.9h-1.9zM1456.40 396.60h1.9v1.9h-1.9zM1458.30 396.60h1.9v1.9h-1.9zM1545.20 396.60h1.9v1.9h-1.9zM1543.30 396.60h1.9v1.9h-1.9zM1462.10 396.60h1.9v1.9h-1.9zM1541.40 396.60h1.9v1.9h-1.9zM1464.00 396.60h1.9v1.9h-1.9zM1539.50 396.60h1.9v1.9h-1.9zM1465.90 396.60h1.9v1.9h-1.9zM1537.60 396.60h1.9v1.9h-1.9zM1467.80 396.60h1.9v1.9h-1.9zM1535.70 396.60h1.9v1.9h-1.9zM1471.60 396.60h1.9v1.9h-1.9zM1530.00 396.60h1.9v1.9h-1.9zM1528.10 396.60h1.9v1.9h-1.9zM1477.30 396.60h1.9v1.9h-1.9zM1483.00 396.60h1.9v1.9h-1.9zM1520.50 396.60h1.9v1.9h-1.9zM1484.90 396.60h1.9v1.9h-1.9zM1511.00 396.60h1.9v1.9h-1.9zM1445.00 398.50h1.9v1.9h-1.9zM1558.50 398.50h1.9v1.9h-1.9zM1446.90 398.50h1.9v1.9h-1.9zM1556.60 398.50h1.9v1.9h-1.9zM1448.80 398.50h1.9v1.9h-1.9zM1554.70 398.50h1.9v1.9h-1.9zM1450.70 398.50h1.9v1.9h-1.9zM1452.60 398.50h1.9v1.9h-1.9zM1550.90 398.50h1.9v1.9h-1.9zM1454.50 398.50h1.9v1.9h-1.9zM1549.00 398.50h1.9v1.9h-1.9zM1456.40 398.50h1.9v1.9h-1.9zM1547.10 398.50h1.9v1.9h-1.9zM1458.30 398.50h1.9v1.9h-1.9zM1545.20 398.50h1.9v1.9h-1.9zM1460.20 398.50h1.9v1.9h-1.9zM1543.30 398.50h1.9v1.9h-1.9zM1541.40 398.50h1.9v1.9h-1.9zM1464.00 398.50h1.9v1.9h-1.9zM1539.50 398.50h1.9v1.9h-1.9zM1465.90 398.50h1.9v1.9h-1.9zM1537.60 398.50h1.9v1.9h-1.9zM1467.80 398.50h1.9v1.9h-1.9zM1535.70 398.50h1.9v1.9h-1.9zM1469.70 398.50h1.9v1.9h-1.9zM1533.80 398.50h1.9v1.9h-1.9zM1531.90 398.50h1.9v1.9h-1.9zM1528.10 398.50h1.9v1.9h-1.9zM1522.40 398.50h1.9v1.9h-1.9zM1486.80 398.50h1.9v1.9h-1.9zM1494.40 398.50h1.9v1.9h-1.9zM1445.00 400.40h1.9v1.9h-1.9zM1558.50 400.40h1.9v1.9h-1.9zM1446.90 400.40h1.9v1.9h-1.9zM1554.70 400.40h1.9v1.9h-1.9zM1450.70 400.40h1.9v1.9h-1.9zM1552.80 400.40h1.9v1.9h-1.9zM1452.60 400.40h1.9v1.9h-1.9zM1550.90 400.40h1.9v1.9h-1.9zM1454.50 400.40h1.9v1.9h-1.9zM1549.00 400.40h1.9v1.9h-1.9zM1456.40 400.40h1.9v1.9h-1.9zM1458.30 400.40h1.9v1.9h-1.9zM1460.20 400.40h1.9v1.9h-1.9zM1543.30 400.40h1.9v1.9h-1.9zM1541.40 400.40h1.9v1.9h-1.9zM1539.50 400.40h1.9v1.9h-1.9zM1465.90 400.40h1.9v1.9h-1.9zM1537.60 400.40h1.9v1.9h-1.9zM1533.80 400.40h1.9v1.9h-1.9zM1531.90 400.40h1.9v1.9h-1.9zM1473.50 400.40h1.9v1.9h-1.9zM1530.00 400.40h1.9v1.9h-1.9zM1475.40 400.40h1.9v1.9h-1.9zM1528.10 400.40h1.9v1.9h-1.9zM1477.30 400.40h1.9v1.9h-1.9zM1483.00 400.40h1.9v1.9h-1.9zM1486.80 400.40h1.9v1.9h-1.9zM1494.40 400.40h1.9v1.9h-1.9z"/></svg>
<svg style="left:0;top:290px" width="1680" height="40" viewBox="0 290 1680 40"><rect x="418.25" y="303.1" width="1.5" height="9.5" fill="#8f99a5"/><rect x="465.75" y="303.1" width="1.5" height="9.5" fill="#8f99a5"/><rect x="504.05" y="303.1" width="1.5" height="9.5" fill="#8f99a5"/><rect x="532.55" y="303.1" width="1.5" height="9.5" fill="#8f99a5"/><rect x="559.25" y="303.1" width="1.5" height="9.5" fill="#8f99a5"/><rect x="584.25" y="303.1" width="1.5" height="9.5" fill="#8f99a5"/><rect x="607.05" y="303.1" width="1.5" height="9.5" fill="#8f99a5"/><rect x="628.05" y="303.1" width="1.5" height="9.5" fill="#8f99a5"/><rect x="646.15" y="303.1" width="1.5" height="9.5" fill="#8f99a5"/><rect x="661.65" y="303.1" width="1.5" height="9.5" fill="#8f99a5"/><rect x="673.95" y="303.1" width="1.5" height="9.5" fill="#8f99a5"/><rect x="683.45" y="303.1" width="1.5" height="9.5" fill="#8f99a5"/><rect x="692.15" y="303.1" width="1.5" height="9.5" fill="#8f99a5"/><rect x="701.65" y="303.1" width="1.5" height="9.5" fill="#8f99a5"/><rect x="711.25" y="303.1" width="1.5" height="9.5" fill="#8f99a5"/><rect x="719.75" y="303.1" width="1.5" height="9.5" fill="#8f99a5"/><rect x="727.55" y="303.1" width="1.5" height="9.5" fill="#8f99a5"/><rect x="734.05" y="303.1" width="1.5" height="9.5" fill="#8f99a5"/><rect x="739.85" y="303.1" width="1.5" height="9.5" fill="#8f99a5"/><rect x="745.65" y="303.1" width="1.5" height="9.5" fill="#8f99a5"/><rect x="750.00" y="303.1" width="1.8" height="9.5" fill="#8f99a5"/><rect x="755.40" y="303.1" width="1.7" height="9.5" fill="#8f99a5"/><rect x="761.30" y="303.1" width="1.9" height="9.5" fill="#8f99a5"/><rect x="766.95" y="303.1" width="2.1" height="9.5" fill="#8f99a5"/><rect x="773.00" y="303.1" width="2.4" height="9.5" fill="#8f99a5"/><rect x="779.55" y="303.1" width="2.9" height="9.5" fill="#8f99a5"/><rect x="787.10" y="303.1" width="3.8" height="9.5" fill="#8f99a5"/><rect x="794.90" y="303.1" width="4.4" height="9.5" fill="#8f99a5"/><rect x="803.15" y="303.1" width="5.9" height="9.5" fill="#8f99a5"/><rect x="813.00" y="303.1" width="8" height="9.5" fill="#8f99a5"/><rect x="830.75" y="303.1" width="11.60" height="9.5" fill="#2e2e38"/><rect x="843.85" y="303.1" width="8.90" height="9.5" fill="#2e2e38"/><rect x="854.25" y="303.1" width="9.40" height="9.5" fill="#2e2e38"/><rect x="865.15" y="303.1" width="9.70" height="9.5" fill="#2e2e38"/><rect x="876.35" y="303.1" width="11.00" height="9.5" fill="#2e2e38"/><rect x="888.85" y="303.1" width="11.65" height="9.5" fill="#2e2e38"/><rect x="902.00" y="303.1" width="12.85" height="9.5" fill="#2e2e38"/><rect x="916.35" y="303.1" width="14.15" height="9.5" fill="#2e2e38"/><rect x="932.00" y="303.1" width="14.50" height="9.5" fill="#2e2e38"/><rect x="948.00" y="303.1" width="15.65" height="9.5" fill="#2e2e38"/><rect x="965.15" y="303.1" width="16.60" height="9.5" fill="#2e2e38"/><rect x="983.25" y="303.1" width="17.50" height="9.5" fill="#2e2e38"/><rect x="1002.25" y="303.1" width="18.50" height="9.5" fill="#2e2e38"/><rect x="1022.25" y="303.1" width="19.50" height="9.5" fill="#2e2e38"/><rect x="1043.25" y="303.1" width="21.50" height="9.5" fill="#2e2e38"/><rect x="1066.25" y="303.1" width="23.50" height="9.5" fill="#2e2e38"/><rect x="1091.25" y="303.1" width="25.30" height="9.5" fill="#2e2e38"/><rect x="1118.05" y="303.1" width="45.70" height="9.5" fill="#2e2e38"/><circle cx="828.3" cy="308" r="10.4" fill="#2d2d36" opacity="0.7"/><circle cx="828.3" cy="308" r="9.8" fill="#2fe07e"/></svg>
<div class="t" style="left:1211.03px;top:301.32px;font-size:11.62px;letter-spacing:1.0px;color:#1aef88;transform:scaleX(1.028);transform-origin:0 0;">0%</div>
<svg style="left:1610px;top:1160px" width="30" height="24" viewBox="1610 1160 30 24"><path d="M1614.4 1172.2 L1619.2 1165.3 H1633.6 Q1635.6 1165.3 1635.6 1167.3 V1177.2 Q1635.6 1179.2 1633.6 1179.2 H1619.2 Z" fill="#6f6f7d"/><path d="M1622.6 1169 L1628.6 1175.4 M1628.6 1169 L1622.6 1175.4" stroke="#2d2d36" stroke-width="1.7" stroke-linecap="round"/></svg>
</body></html>
